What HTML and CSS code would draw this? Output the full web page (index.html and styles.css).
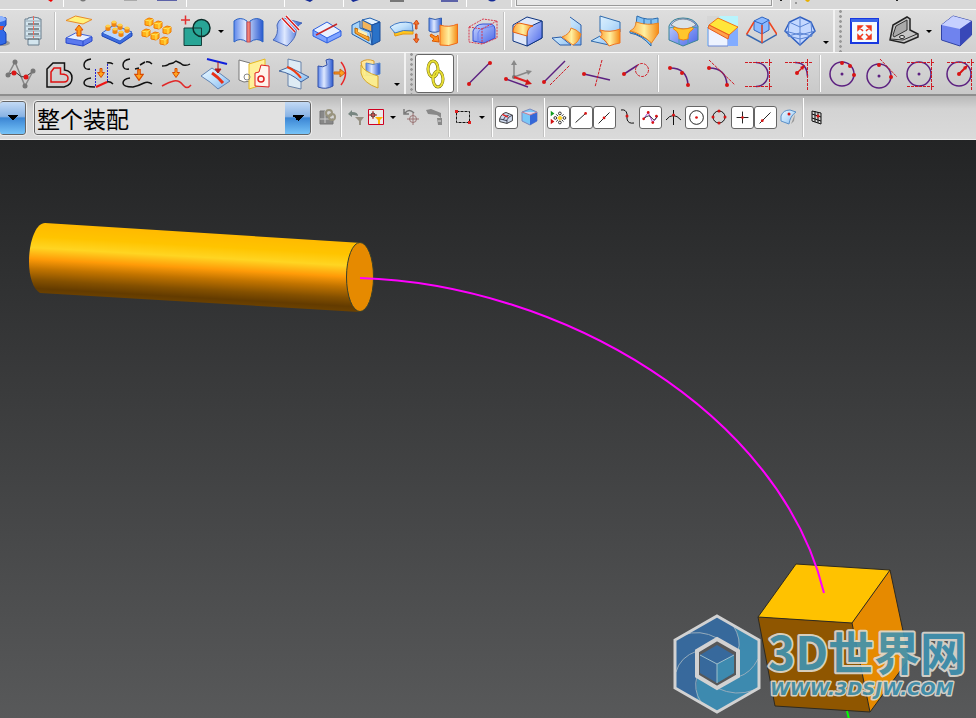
FILE: index.html
```html
<!DOCTYPE html>
<html lang="zh-CN">
<head>
    <meta charset="UTF-8">
    <meta name="viewport" content="width=device-width, initial-scale=1.0">
    <title>装配建模</title>
    <link rel="stylesheet" href="styles.css">
</head>
<body>
    <!-- Shared gradients and small symbols -->
    <svg class="defs" aria-hidden="true">
        <defs>
            <linearGradient id="blue"><stop offset="0" stop-color="#5d86ea"/><stop offset=".4" stop-color="#dfe9ff"/><stop offset="1" stop-color="#2858d0"/></linearGradient>
            <linearGradient id="ice" x2="1" y2="1"><stop offset="0" stop-color="#e9f7ff"/><stop offset=".5" stop-color="#bfe0fb"/><stop offset="1" stop-color="#80b4ee"/></linearGradient>
            <linearGradient id="deep" x2="1" y2="1"><stop offset="0" stop-color="#c8d6ff"/><stop offset="1" stop-color="#4a66e8"/></linearGradient>
            <linearGradient id="gold"><stop offset="0" stop-color="#ffa83a"/><stop offset=".5" stop-color="#fff0a0"/><stop offset="1" stop-color="#f58a14"/></linearGradient>
            <symbol id="arrow-down" viewBox="0 0 8 10"><path d="M3 .5h2v4h2.500L4 9.500.5 4.500H3z" fill="#ffa51e" stroke="#d84a00"/></symbol>
            <symbol id="cube" viewBox="0 0 10 10"><path d="M1 3l4-2 4 1v5L6 9 1 8z" fill="#ffb31a" stroke="#f07800"/><path d="M1 3l5 1v5M6 4l3-2" fill="none" stroke="#ffe75a"/></symbol>
            <symbol id="peg" viewBox="0 0 6 8"><path d="M.5 2v4q2.500 2 5 0V2z" fill="#ef8410"/><ellipse cx="3" cy="2" rx="2.500" ry="1.500" fill="#ffd04a"/></symbol>
        </defs>
    </svg>

    <header class="toolbars">
        <div class="toolbar toolbar-top">
            <svg class="top-left" viewBox="0 0 516 9">
                <path d="M48 0h5l-2 2z" fill="#f00000"/>
                <path d="M80 0h6q-3 3-6 0zM390 0h14v2h-14z" fill="#777"/>
                <path d="M124 0h13v1h-13z" fill="#aaa"/>
                <path d="M157 0h20v1h-20zM441 0h17v2h-17z" fill="#5c62a8"/>
                <path d="M305 0h8l-3 2zM351 0h8l-6 2zM488 0h8q-4 3-8 0z" fill="#142a96"/>
                <path d="M63.500 0v7M186.500 0v7M284.500 0v7M343.500 0v7M466.500 0v7M511.500 0v7" stroke="#fff"/>
            </svg>
            <input class="top-field" type="text" aria-label="命令查找器">
            <svg class="top-right" viewBox="0 0 140 9">
                <path d="M18.500 0v9" stroke="#fff"/>
                <path d="M8 0h2v1H8zM124 0h2v1h-2z" fill="#222"/>
                <path d="M33 0h5q-2 4-5 0z" fill="#e8b000"/>
                <path d="M23 2h2v2h-2z" fill="#999"/>
            </svg>
        </div>

        <div class="toolbar toolbar-features">
            <button class="tool" aria-label="孔"><svg viewBox="0 0 32 32"><ellipse cx="24" cy="28" rx="8" ry="3" fill="#999"/><path d="M12 3q8-3 16 0v7q-3 3-3 5 3 2 3 4v9q-8 4-16 1z" fill="#3169e8" stroke="#1743b4"/><path d="M18 11h8l-2 4h-6z" fill="#e5482a"/><ellipse cx="20" cy="4" rx="8" ry="3" fill="#8eb4ff"/></svg></button>
            <button class="tool" aria-label="螺纹"><svg viewBox="0 0 32 32"><path d="M11 3q5-2 11 0v1h2v20h-2v6H11v-6H8V4h3z" fill="#d3e5ee" stroke="#697d8c"/><path d="M9 6h15M9 11h15M9 16h15M9 21h15" stroke="#93a5b1"/><path d="M11 9h11M11 14h11M11 19h11M11 24h11" stroke="#30363c"/><path d="M16.500 1v22" stroke="#ee6a5c" stroke-dasharray="4 1"/></svg></button>
            <span class="separator"></span>
            <button class="tool" aria-label="拉伸"><svg viewBox="0 0 32 32"><path d="M4 5.500L13.500 1 30 4.500 21 9z" fill="#fff27a" stroke="#e88a2a"/><path d="M4 23v5l17 3 9-5v-4z" fill="#5b79ee" stroke="#2746c8"/><path d="M4 23l9.500-5L30 21.500 21 26z" fill="#e6efff" stroke="#3f60d8"/><path d="M21 26v5" stroke="#2746c8"/><path d="M17 10l4 5h-2v6h-4v-6h-2z" fill="#ff9d14" stroke="#dc5000"/></svg></button>
            <button class="tool" aria-label="实例特征"><svg viewBox="0 0 32 32"><path d="M1 18v3l18 8 12-8v-3z" fill="#3d6be0" stroke="#1a46b8"/><path d="M1 18l12-8 18 7-12 9z" fill="#b9d6ff" stroke="#2f60cc"/><use href="#peg" x="10" y="5" width="6" height="8"/><use href="#peg" x="4" y="9" width="6" height="8"/><use href="#peg" x="16" y="8" width="6" height="8"/><use href="#peg" x="23" y="11" width="6" height="8"/><use href="#peg" x="11" y="12" width="6" height="8"/><use href="#peg" x="17" y="15" width="6" height="8"/></svg></button>
            <button class="tool" aria-label="阵列"><svg viewBox="0 0 32 32"><use href="#cube" x="4" y="2" width="10" height="10"/><use href="#cube" x="13" y="5" width="10" height="10"/><use href="#cube" x="22" y="10" width="10" height="10"/><use href="#cube" x="1" y="13" width="10" height="10"/><use href="#cube" x="10" y="16" width="10" height="10"/><use href="#cube" x="19" y="21" width="10" height="10"/></svg></button>
            <button class="tool" aria-label="求和"><svg viewBox="0 0 32 32"><circle cx="22.500" cy="13" r="8.500" fill="#28a596"/><path d="M5 13h17.500v17.500H5z" fill="#28a596" stroke="#153f3a"/><circle cx="22.500" cy="13" r="8.500" fill="none" stroke="#0b2c28" stroke-width="1.500"/><path d="M2 5h9M6.500.5v9" stroke="#e23131" stroke-width="1.500"/></svg></button>
            <button class="drop" aria-label="更多布尔运算"></button>
            <button class="tool" aria-label="修剪体"><svg viewBox="0 0 32 32"><path d="M2 6q6-5 13 0v21q-7-5-13 0zM18 6q7-5 13 0v21q-6-5-13 0z" fill="url(#blue)" stroke="#2b62c4"/><path d="M15 7h3v20h-3z" fill="#f0837a" stroke="#d05050"/></svg></button>
            <button class="tool" aria-label="修剪片体"><svg viewBox="0 0 32 32"><path d="M2 25q6-5 4-15 1-5 6-7l19 5q-6 3-6 9t-9 14z" fill="url(#blue)" stroke="#4a69b8"/><path d="M11 3l13 14M15 1l13 14" stroke="#fff" stroke-width="3"/><path d="M11 3l13 14M15 1l13 14" stroke="#d81e1e" stroke-width="1.500"/></svg></button>
            <button class="tool" aria-label="拆分体"><svg viewBox="0 0 32 32"><path d="M3 15v6l14 7 14-7v-5z" fill="#7fa4ff" stroke="#2d5ee0"/><path d="M3 15l14-8 14 9-14 7z" fill="#e9f1ff" stroke="#2d5ee0"/><path d="M17 23v5" stroke="#2d5ee0"/><path d="M6 20L27 9" stroke="#c82828" stroke-width="1.500"/></svg></button>
            <button class="tool" aria-label="抽取"><svg viewBox="0 0 32 32"><path d="M3 10l8-4v7l10 4 2 13L3 19z" fill="#a8d4f8" stroke="#1e5eae"/><path d="M6 13l3 1v3l11 5v4L6 18z" fill="#ffa62e" stroke="#b06a10"/><path d="M9 14l9 4v3l-9-4z" fill="#fff0b0"/><path d="M13 5l8-2 10 4-8 3z" fill="#dff0ff" stroke="#1e5eae"/><path d="M13 5l10 5v7l-10-4z" fill="#f2b45a" stroke="#1e5eae"/><path d="M23 10l8-3v19l-8 4z" fill="#2a72c8" stroke="#1a4c98"/></svg></button>
            <button class="tool" aria-label="加厚"><svg viewBox="0 0 32 32"><path d="M6 17q9-4 19-2v4Q14 18 7 21z" fill="#ffc61c" stroke="#e8960c"/><path d="M2 12q9-7 22-4l1 8q-10-2-18 2z" fill="url(#ice)" stroke="#3e78c4"/><path d="M28.500 5l2.500 4h-2v5h-1.500V9h-2zM28.500 28l2.500-4h-2v-5h-1.500v5h-2z" fill="#f5762c" stroke="#d04a16"/></svg></button>
            <button class="tool" aria-label="偏置曲面"><svg viewBox="0 0 32 32"><path d="M2 3q6 3 12.500 0v12q-6 4-12.500 1z" fill="url(#blue)" stroke="#315eae"/><path d="M13 10q9 3 17.500-1v19q-9 4-17.500 2z" fill="url(#gold)" stroke="#ee6a1c"/><path d="M4 19l5 3 2-2 1 7-7-1 2-2-4-3z" fill="#ff8b1c" stroke="#dd5a00"/></svg></button>
            <button class="tool" aria-label="包容体"><svg viewBox="0 0 32 32"><path d="M7 26V16q3-7 10-7h8q4 1 4 5v9l-11 5z" fill="url(#deep)" stroke="#3250d4"/><path d="M12 27v-9q2-5 7-5l9-2" fill="none" stroke="#6a84f0"/><path d="M3 12L17 4l14 2v17l-15 6-13-2zM3 12l13 2v15M16 14l15-8" fill="none" stroke="#d8344a" stroke-dasharray="2 1"/></svg></button>
            <span class="separator"></span>
            <button class="tool" aria-label="边倒圆"><svg viewBox="0 0 32 32"><path d="M2 10L16 2l15 4v17l-15 8-14-5z" fill="#dfe7f8" stroke="#0e3480"/><path d="M16 13L31 6v17l-15 8z" fill="url(#deep)" stroke="#0e3480"/><path d="M2 16q1-7 6-8l14 3q-6 1-6 10L2 17z" fill="url(#gold)" stroke="#e95e10"/></svg></button>
            <button class="tool" aria-label="面倒圆"><svg viewBox="0 0 32 32"><path d="M20 2l11 8v20h-8M2 23l9-1 10 8H10z" fill="url(#ice)" stroke="#2a5da8"/><path d="M12 22q8-3 9-9 5 1 10 6-2 8-8 11z" fill="url(#gold)" stroke="#e9812a"/></svg></button>
            <button class="tool" aria-label="软倒圆"><svg viewBox="0 0 32 32"><path d="M11 1l20 6v10H11zM2 26l9-5 9 9z" fill="url(#ice)" stroke="#2f6aac"/><path d="M11 15q10 3 20-1v14q-6 1-11 3-3-6-9-9 4-2 0-7z" fill="url(#gold)" stroke="#f07422"/></svg></button>
            <button class="tool" aria-label="桥接"><svg viewBox="0 0 32 32"><path d="M9 1q10 5 21 2v7H8zM2 16l21 10v5Q14 20 2 18z" fill="#83c2f4" stroke="#2a6aac"/><path d="M8 7q12 4 22.500 1v10l-7 10Q13 18 2 16q6-3 6-9z" fill="url(#gold)" stroke="#ee8420"/><path d="M16 4v5M23 5v4" stroke="#2a6aac"/></svg></button>
            <button class="tool" aria-label="球形拐角"><svg viewBox="0 0 32 32"><path d="M2 11Q5 3 16 3t15 8v14l-15 6-14-6z" fill="url(#deep)" stroke="#3c8494"/><path d="M4 10q4-6 12-6t13 6q-5 4-12 4T4 10z" fill="#dce2e8" stroke="#789"/><path d="M7 12q4 2 9 2t10-2q1 2-1 3-4 2-4 9-5 2-9 0 0-7-4-9-3-1-1-3z" fill="#ffc62c" stroke="#f08214"/><path d="M2 13l5-1M25 12l6 1M12 29v-5M21 29v-5" fill="none" stroke="#42a0b0"/></svg></button>
            <button class="tool" aria-label="倒斜角"><svg viewBox="0 0 32 32"><path d="M1 1h31v30H1z" fill="#b8f4fc"/><path d="M1 1h13L1 11z" fill="#d6d6d6"/><path d="M2 12l20 8v11H2z" fill="#edf3ff" stroke="#6a86d4"/><path d="M22 20l10-9v20H22z" fill="#82acff"/><path d="M3 10l9-7 20 9-9 8z" fill="#ffe63a" stroke="#f27216"/><path d="M3 10l20 10-1 4L2 13z" fill="#ffa24a" stroke="#e85a1c"/></svg></button>
            <button class="tool" aria-label="拔模"><svg viewBox="0 0 32 32"><path d="M1.500 19.500L17 28l15-8.500" fill="none" stroke="#3567b0" stroke-width="1.500"/><path d="M9 6l8-4 7 3v10l-7 4-8-4z" fill="#8cbaff" stroke="#2f64c0"/><path d="M9 6l8 3 7-4M17 9v10" fill="none" stroke="#2f64c0"/><path d="M9 7L1.500 19.500M24 7l8 12.500M17 10v18" stroke="#ee4520" stroke-width="1.500"/></svg></button>
            <button class="tool" aria-label="体"><svg viewBox="0 0 32 32"><path d="M16 2l11 5 4 9-15 14L1 16l4.500-9z" fill="#c4d8ff" stroke="#2f5fc0" stroke-width="1.500"/><path d="M5 7l11 5 11-5M1 16l15 4 15-4M16 2v28M5 7l-1 14 12-3 12 3-1-14M4 21l12 3 12-3" fill="none" stroke="#5a84d4"/></svg></button>
            <button class="drop drop-low" aria-label="工具条选项"></button>
            <span class="grip"></span>
            <button class="tool" aria-label="适合窗口"><svg viewBox="0 0 32 32"><path d="M3 4h27v24H3z" fill="#f4fbff" stroke="#1838e0" stroke-width="2"/><path d="M3 4h27v3H3z" fill="#3b66e8"/><path d="M10 11h4l-4 4zM23 11h-4l4 4zM10 24h4l-4-4zM23 24h-4l4-4zM11 12l4 4M22 12l-4 4M11 23l4-4M22 23l-4-4" fill="#f0381c" stroke="#f0381c" stroke-width="1.500"/></svg></button>
            <button class="tool" aria-label="渲染样式"><svg viewBox="0 0 32 32"><path d="M3 25l3-15L20 2l3 2v11l8 4v3l-14 6z" fill="#c6c6c6" stroke="#222" stroke-width="1.500"/><path d="M6 20l3-9 11-6v10L7 22z" fill="#a9a9a9" stroke="#333"/><path d="M3 24l13 1 14-6" fill="none" stroke="#333"/><ellipse cx="15" cy="22" rx="2.500" ry="1.500" fill="#eee" stroke="#222"/></svg></button>
            <button class="drop" aria-label="更多渲染样式"></button>
            <button class="tool" aria-label="视图方向"><svg viewBox="0 0 32 32"><path d="M1.500 10L13 1l18.500 5v14L20 31 1.500 25z" fill="#6f83ee" stroke="#3042a4"/><path d="M1.500 10L13 1l18.500 5L20 14z" fill="#c6d0ff"/><path d="M20 14l11.500-8v14L20 31z" fill="#3848b8"/></svg></button>
        </div>

        <div class="toolbar toolbar-curves">
            <button class="tool" aria-label="样条"><svg viewBox="0 0 32 32"><path d="M4 17l7-13 10 24 8-15" fill="none" stroke="#888" stroke-width="1.500"/><path d="M4 17q7-5 11 0t13-3" fill="none" stroke="#333"/><g fill="#777"><circle cx="4" cy="17" r="2.500"/><circle cx="11" cy="4" r="2.500"/><circle cx="21" cy="28" r="2.500"/><circle cx="29" cy="13" r="2.500"/></g><g fill="#dc1616"><circle cx="10" cy="15" r="2.500"/><circle cx="22" cy="19" r="2.500"/></g></svg></button>
            <button class="tool" aria-label="偏置曲线"><svg viewBox="0 0 32 32"><path d="M4 29V11l6-6h11.500v7q7.500 1 7.500 8t-8 9z" fill="none" stroke="#111" stroke-width="1.500"/><path d="M8 24V14l3-4h6.500v6q7.500 0 7.500 4t-4 4z" fill="none" stroke="#e01010" stroke-width="1.500"/></svg></button>
            <button class="tool" aria-label="桥接曲线"><svg viewBox="0 0 32 32"><path d="M9 1Q2 2 2 7t6 4M25 5q3-1 6 1M9 20q-7 1-7 5t11 4M25 24q3-1 6 2" fill="none" stroke="#111" stroke-width="1.500"/><path d="M13.500 11v17M25.500 6v18" stroke="#2020d8" stroke-dasharray="2 1"/><path d="M14 29l11-5" stroke="#ee1414" stroke-width="2"/><use href="#arrow-down" x="15" y="10" width="8" height="10"/></svg></button>
            <button class="tool" aria-label="连结曲线"><svg viewBox="0 0 32 32"><path d="M9 1Q2 2 2 7t6 4M14 11l4-1M19 7l5-3M25 4q3-1 6 2M9 20q-7 1-7 5t10 4q5-1 11-4 4-2 8 1" fill="none" stroke="#111" stroke-width="1.500"/><use href="#arrow-down" x="13" y="11" width="10" height="12"/></svg></button>
            <button class="tool" aria-label="光顺曲线"><svg viewBox="0 0 32 32"><path d="M2 8q5 0 7-2l4-1 3-2 4 2 3 2q4 1 7-1" fill="none" stroke="#111" stroke-width="1.500"/><path d="M2 28Q9 24 14 23t9 4 8 0" fill="none" stroke="#e02828" stroke-width="1.500"/><use href="#arrow-down" x="12" y="10" width="8" height="10"/></svg></button>
            <button class="tool" aria-label="投影曲线"><svg viewBox="0 0 32 32"><path d="M2 18l11-8q9 6 18 13l-12 8Q12 24 2 18z" fill="url(#ice)" stroke="#6284b4"/><path d="M8 1l20 5" stroke="#1020dc" stroke-width="2"/><path d="M19 4v8M16 11h6l-3 4z" stroke="#b01818" fill="#b01818"/><path d="M13 15q6 4 11 10" fill="none" stroke="#e73018" stroke-width="3"/></svg></button>
            <button class="tool" aria-label="组合投影"><svg viewBox="0 0 32 32"><path d="M1 2l11 3v18l-6 1-5-2z" fill="#fff" stroke="#777"/><path d="M11 6l16-5v25l-16 5z" fill="#fff09a" stroke="#e6b820"/><circle cx="9" cy="19" r="3" fill="none" stroke="#888"/><path d="M17 28V15l4-1 2-7 8 1v21z" fill="#fff3ec" stroke="#e02020"/><circle cx="23" cy="21" r="3" fill="none" stroke="#e02020" stroke-width="1.500"/></svg></button>
            <button class="tool" aria-label="相交曲线"><svg viewBox="0 0 32 32"><path d="M11 1l13 3v27l-13-3z" fill="#deebf4" stroke="#6882a8"/><path d="M2 13l10-4 20 10-8 5Q14 15 2 13z" fill="url(#ice)" stroke="#45679e"/><path d="M10 9q8 3 14 11" fill="none" stroke="#f03c10" stroke-width="2"/></svg></button>
            <button class="tool" aria-label="抽取曲线"><svg viewBox="0 0 32 32"><path d="M2 8q5 2 9-1l-1-5q3-2 7 0v26q-7 4-15 1z" fill="url(#blue)" stroke="#3351a8"/><path d="M18 14h6v-3l5 4-5 4v-3h-6z" fill="#ff9f1c" stroke="#c86414"/><path d="M25 4q9 11 0 23" fill="none" stroke="#e82828" stroke-width="1.500"/></svg></button>
            <button class="tool" aria-label="缠绕曲线"><svg viewBox="0 0 32 32"><path d="M6 4q6-4 13-1v12l-10 3z" fill="#ffe596" stroke="#d69c34"/><path d="M11 5q7 3 14 0v11q-7 3-14 1z" fill="url(#blue)" stroke="#5a88c8"/><path d="M6 7q3 7 17 11v12Q8 25 6 15z" fill="#fff08a" fill-opacity=".9" stroke="#d8a82a"/></svg></button>
            <button class="drop drop-low" aria-label="工具条选项"></button>
            <span class="grip"></span>
            <button class="tool tool-on" aria-label="关联"><svg viewBox="0 0 32 32"><g fill="none"><g stroke="#777010" stroke-width="3"><ellipse cx="14" cy="11" rx="5" ry="8"/><ellipse cx="19" cy="21" rx="5" ry="8"/></g><g stroke="#e9df35" stroke-width="2"><ellipse cx="14" cy="11" rx="5" ry="8"/><ellipse cx="19" cy="21" rx="5" ry="8"/></g></g></svg></button>
            <span class="separator"></span>
            <button class="tool" aria-label="直线"><svg viewBox="0 0 32 32"><path d="M4.500 26l21-21" class="curve"/><circle cx="5" cy="26" r="2" class="dot"/><circle cx="26" cy="5" r="2" class="dot"/></svg></button>
            <button class="tool" aria-label="沿轴直线"><svg viewBox="0 0 32 32"><path d="M11 19V5M11 19l14-5" stroke="#888" stroke-width="1.500"/><path d="M8 7l3-5 3 5zM23 12l6 1-4 4z" fill="#888"/><circle cx="11" cy="19" r="2" fill="#777"/><path d="M11 19l14 5" stroke="#e02020" stroke-width="2"/><path d="M24 21l5 5-7 1z" fill="#d01414"/><path d="M3 21l22 8" class="curve"/><circle cx="3" cy="21" r="2" class="dot"/></svg></button>
            <button class="tool" aria-label="平行直线"><svg viewBox="0 0 32 32"><path d="M2 24L23 3" class="curve"/><path d="M8 27L28 7" class="guide"/><circle cx="2" cy="24" r="2" class="dot"/></svg></button>
            <button class="tool" aria-label="垂直直线"><svg viewBox="0 0 32 32"><path d="M3 16l26 6" class="curve"/><path d="M21 2l-7 27" class="guide"/><circle cx="3" cy="16" r="2" class="dot"/></svg></button>
            <button class="tool" aria-label="相切直线"><svg viewBox="0 0 32 32"><path d="M4 16l14-9" class="curve"/><circle cx="22" cy="12" r="6.500" class="guide"/><circle cx="4" cy="16" r="2" class="dot"/></svg></button>
            <span class="separator"></span>
            <button class="tool" aria-label="三点圆弧"><svg viewBox="0 0 32 32"><path d="M5 10q17 0 18 17" class="curve"/><circle cx="5" cy="10" r="2" class="dot"/><circle cx="17" cy="15" r="2" class="dot"/><circle cx="23" cy="27" r="2" class="dot"/></svg></button>
            <button class="tool" aria-label="相切圆弧"><svg viewBox="0 0 32 32"><path d="M5 10q17 0 18 17" class="curve"/><path d="M5 2l26 25" class="guide"/><circle cx="5" cy="10" r="2" class="dot"/><circle cx="23" cy="27" r="2" class="dot"/></svg></button>
            <button class="tool" aria-label="双切圆弧"><svg viewBox="0 0 32 32"><path d="M13 4.500a12 12 0 0 1 0 24" class="curve"/><path d="M2 4.500h28M2 28.500h28M26.500 1v31" class="guide"/></svg></button>
            <button class="tool" aria-label="半径圆弧"><svg viewBox="0 0 32 32"><path d="M13 4.500q12 0 12.500 14" class="curve"/><path d="M3 4.500h27M25.500 1v31" class="guide"/><path d="M15 15l6-6" stroke="#d81414" stroke-width="1.500"/><path d="M18 9l5-2-2 5z" class="dot"/><circle cx="15" cy="15" r="2" class="dot"/></svg></button>
            <span class="separator"></span>
            <button class="tool" aria-label="三点圆"><svg viewBox="0 0 32 32"><circle cx="15" cy="16" r="12" class="curve"/><circle cx="15" cy="16" r="1.500" fill="#5c2080"/><circle cx="15" cy="5" r="2" class="dot"/><circle cx="23" cy="8" r="2" class="dot"/><circle cx="27" cy="17" r="2" class="dot"/></svg></button>
            <button class="tool" aria-label="相切圆"><svg viewBox="0 0 32 32"><circle cx="13" cy="18" r="12" class="curve"/><circle cx="13" cy="18" r="1.500" fill="#5c2080"/><path d="M14 1l17 18" class="guide"/><circle cx="13" cy="7" r="2" class="dot"/><circle cx="25" cy="19" r="2" class="dot"/></svg></button>
            <button class="tool" aria-label="双切圆"><svg viewBox="0 0 32 32"><circle cx="14" cy="16" r="12" class="curve"/><circle cx="14" cy="16" r="1.500" fill="#5c2080"/><path d="M2 4.500h27M2 28.500h27M26.500 1v31" class="guide"/></svg></button>
            <button class="tool" aria-label="半径圆"><svg viewBox="0 0 32 32"><circle cx="15" cy="16" r="12" class="curve"/><path d="M3 4.500h27M27.500 1v31" class="guide"/><path d="M15 16l7-7" stroke="#d81414" stroke-width="2"/><path d="M19 9l5-2-2 5z" class="dot"/><circle cx="15" cy="16" r="2" class="dot"/></svg></button>
        </div>

        <div class="toolbar toolbar-selection">
            <select class="picker picker-type" aria-label="类型过滤器"><option></option></select>
            <select class="picker picker-scope" aria-label="选择范围"><option>整个装配</option></select>
            <button class="mini" aria-label="仅在工作部件内"><svg viewBox="0 0 23 23"><path d="M5 5h5v5h4v3h4v5H5z" fill="#888" stroke="#777"/><path d="M10 5v12M5 13h12" stroke="#ccc"/><g fill="none" stroke="#99947f" stroke-width="2"><circle cx="14" cy="7" r="3"/><circle cx="17" cy="11" r="3"/></g></svg></button>
            <span class="separator"></span>
            <button class="mini" aria-label="重置过滤器"><svg viewBox="0 0 23 23"><path d="M4 8l4-4v2q6 0 6 4-3-1-6-1v2z" fill="#778580"/><path d="M11 11h9l-3 4v4h-2v-4z" fill="#969184"/></svg></button>
            <button class="mini mini-narrow" aria-label="过滤器"><svg viewBox="0 0 19 23"><path d="M1.500 3.500h15v15h-15z" fill="#eceaea" stroke="#d00020"/><circle cx="6" cy="9" r="2" fill="none" stroke="#222"/><path d="M6 5v8M2 9h8" stroke="#b02020"/><path d="M8 11h8l-3 3v4h-2v-4z" fill="#ffb400"/></svg></button>
            <button class="drop" aria-label="过滤器选项"></button>
            <button class="mini" aria-label="取消选择"><svg viewBox="0 0 23 23"><path d="M5 7q4-5 9 0M4 3v5h5" fill="none" stroke="#777" stroke-width="1.500"/><circle cx="13" cy="13" r="3.500" fill="none" stroke="#9a7474"/><path d="M13 7v12M7 13h12" stroke="#9a7474"/></svg></button>
            <button class="mini" aria-label="全部选择"><svg viewBox="0 0 23 23"><path d="M3 4l5-1 10 4v5l-4-3-9-1zM14 12h5v7h-4z" fill="#888"/><path d="M15 15h3" stroke="#ddd"/></svg></button>
            <span class="separator"></span>
            <button class="mini" aria-label="矩形选择"><svg viewBox="0 0 23 23"><path d="M4.500 5.500h13v11h-13z" fill="none" stroke="#111" stroke-dasharray="3 1"/><path d="M3 4h3v3H3zM16 15h3v3h-3z" fill="#e02020"/></svg></button>
            <button class="drop" aria-label="选择方式"></button>
            <span class="separator"></span>
            <button class="mini mini-on" aria-label="高亮隐藏边"><svg viewBox="0 0 23 23"><path d="M4 13q2-6 7-7l7 3v6l-6 3-8-2z" fill="#ccd8ec" stroke="#333"/><path d="M8 14q2-5 6-5M12 18v-4q2-4 6-5M4 13l8 2" fill="none" stroke="#334"/><path d="M7 8l6 3" stroke="#e02020" stroke-width="1.500"/></svg></button>
            <button class="mini" aria-label="着色体"><svg viewBox="0 0 23 23"><path d="M4 6l8-3 7 3v9l-7 4-8-4z" fill="#7ac8f8" stroke="#7a88c0"/><path d="M12 9l7-3v9l-7 4z" fill="#3568d8"/><path d="M4 6l8 3 7-3" fill="#ddd6f0" stroke="#c08090"/></svg></button>
            <span class="separator"></span>
            <button class="mini mini-on" aria-label="启用捕捉点"><svg viewBox="0 0 23 23"><path d="M3 4l4 3-4 3z" fill="#139c20"/><path d="M3 13l4 3-4 3z" fill="#d01010"/><path d="M13 9l3 3-3 3-3-3z" fill="#ffd426"/><g fill="none" stroke="#222"><circle cx="13" cy="7" r="1.500"/><circle cx="13" cy="17" r="1.500"/><circle cx="8" cy="12" r="1.500"/><circle cx="18" cy="12" r="1.500"/><path d="M9 8l2 2M17 8l-2 2M9 16l2-2M17 16l-2-2"/></g></svg></button>
            <button class="mini mini-on" aria-label="端点"><svg viewBox="0 0 23 23"><path d="M5 17L16 7" class="line"/><circle cx="16" cy="7" r="1.500" class="dot"/></svg></button>
            <button class="mini mini-on" aria-label="中点"><svg viewBox="0 0 23 23"><path d="M5 18L17 6" class="line"/><circle cx="11" cy="12" r="1.500" class="dot"/></svg></button>
            <button class="mini" aria-label="控制点"><svg viewBox="0 0 23 23"><path d="M5 4q5-1 6 4v5q1 5 7 4" class="line"/><circle cx="11" cy="10" r="1.500" class="dot"/></svg></button>
            <button class="mini mini-on" aria-label="极点"><svg viewBox="0 0 23 23"><path d="M4 13l5-7 5 11 5-7" fill="none" stroke="#9828c0"/><path d="M4 13q6-6 9-1t6-2" fill="none" stroke="#222"/><g class="dot"><circle cx="4" cy="13" r="1.500"/><circle cx="9" cy="6" r="1.500"/><circle cx="14" cy="17" r="1.500"/><circle cx="18" cy="10" r="1.500"/></g></svg></button>
            <button class="mini" aria-label="交点"><svg viewBox="0 0 23 23"><path d="M4 14q7-9 15 0M11.500 4v15" class="line"/><circle cx="11.500" cy="9" r="1.500" class="dot"/></svg></button>
            <button class="mini mini-on" aria-label="圆心"><svg viewBox="0 0 23 23"><circle cx="11.500" cy="11.500" r="7.500" class="line"/><circle cx="11.500" cy="11.500" r="1.500" class="dot"/></svg></button>
            <button class="mini" aria-label="象限点"><svg viewBox="0 0 23 23"><circle cx="11" cy="11" r="6" class="line"/><g class="dot"><circle cx="11" cy="5" r="1.500"/><circle cx="5" cy="11" r="1.500"/><circle cx="17" cy="11" r="1.500"/><circle cx="11" cy="17" r="1.500"/></g></svg></button>
            <button class="mini mini-on" aria-label="现有点"><svg viewBox="0 0 23 23"><path d="M11.500 5v13M5 11.500h13" class="line"/><circle cx="11.500" cy="11.500" r="1.500" class="dot"/></svg></button>
            <button class="mini mini-on" aria-label="曲线上的点"><svg viewBox="0 0 23 23"><path d="M5 18L17 6" class="line"/><circle cx="8" cy="15" r="1.500" class="dot"/></svg></button>
            <button class="mini" aria-label="面上的点"><svg viewBox="0 0 23 23"><path d="M18 8l-1 7-3 3z" fill="#999"/><path d="M4 10q2-6 9-6l6 2q-6 4-7 12l-8-3z" fill="url(#ice)" stroke="#5a90c8"/><circle cx="12" cy="8" r="1.500" class="dot"/></svg></button>
            <span class="separator"></span>
            <button class="mini" aria-label="有界栅格上的点"><svg viewBox="0 0 23 23"><path d="M6 5l9 2v11l-9-3zM9 5v11M12 6v11M6 8l9 3M6 12l9 3" class="line"/><circle cx="12" cy="10" r="1.500" class="dot"/></svg></button>
        </div>
    </header>

    <main class="viewport">
        <svg class="model" viewBox="0 140 976 578" role="img" aria-label="圆柱、曲线与方块">
            <defs>
                <linearGradient id="cylinder" gradientUnits="userSpaceOnUse" x1="45" y1="223" x2="41" y2="293">
                    <stop offset="0" stop-color="#ffb900"/><stop offset=".2" stop-color="#ffc400"/><stop offset=".36" stop-color="#ffd522"/>
                    <stop offset=".52" stop-color="#ff9b08"/><stop offset=".66" stop-color="#c27400"/><stop offset=".82" stop-color="#845000"/>
                    <stop offset=".94" stop-color="#633b00"/><stop offset="1" stop-color="#6a4000"/>
                </linearGradient>
            </defs>

            <!-- Cylinder -->
            <path d="M45 223L362 243L359 312L40 293C33 289 29 276 29 262C29 241 36 223 45 223z" fill="url(#cylinder)"/>
            <ellipse cx="360" cy="277" rx="13.500" ry="34.500" fill="#e68a00" stroke="#37402c"/>

            <!-- Cube -->
            <path d="M796 564l94 6-38 53-94-6z" fill="#ffc200"/>
            <path d="M758 617l94 6 18 89-95-6z" fill="#8f5600"/>
            <path d="M890 570l19 89-39 53-18-89z" fill="#e68a00"/>
            <path d="M796 564l94 6 19 89-39 53-95-6-17-89zM758 617l94 6 38-53M852 623l18 89" fill="none" stroke="#2e2a20"/>

            <!-- Bridge curve -->
            <path d="M360 278C560 284 780 412 824 593" fill="none" stroke="#f0f" stroke-width="2"/>
            <path d="M847 711l2 8" stroke="#0f0" stroke-width="2"/>

            <!-- Site logo -->
            <g class="logo">
                <path d="M717 616l42 24v48l-42 24-42-24v-48z" fill="#356ca4"/>
                <path d="M733 625l26 15v48l-42 24-20-12q-1-12 0-24l20 12 21-12v-25q3-15-5-26z" fill="#3b90b9"/>
                <path d="M676 672q4-15 21-21M683 635q17-6 34 3M733 625q9 15 5 26M758 659q-7 14-20 18M754 690q-18 7-37-2M701 702q-8-12-4-26" fill="none" stroke="#9db6c8"/>
                <path d="M717 639l21 12v25l-21 12-20-12v-25z" fill="#58595a" stroke="#e0e0e0" stroke-width="4"/>
                <path d="M717 645l17 10v18l-17 10-17-10v-18z" fill="#356ca4"/>
                <path d="M717 664l17-9v18l-17 10z" fill="#3b90b9"/>
                <path d="M700 655l17 9 17-9M717 664v19" fill="none" stroke="#a8cbd9"/>
                <path d="M717 616l42 24v48l-42 24-42-24v-48z" fill="none" stroke="#e0e0e0" stroke-width="3"/>
                <text class="logo-name" x="768" y="670">3D世界网</text>
                <text class="logo-url" x="770" y="695">WWW.3DSJW.COM</text>
            </g>
        </svg>
    </main>
</body>
</html>
```

FILE: styles.css
```css
* {
    box-sizing: border-box;
}
body {
    display: flex;
    flex-direction: column;
    min-height: 100vh;
    margin: 0;
    overflow: hidden;
    background-color: #d6d6d6;
    font-family: "Noto Sans CJK SC", "Liberation Sans", sans-serif;
}
button {
    margin: 0;
    padding: 0;
    border: none;
    background: none;
    cursor: pointer;
}
.defs {
    position: absolute;
    width: 0;
    height: 0;
}

/* Toolbars */
.toolbars {
    overflow: hidden;
    border-bottom: 1px solid #eee;
}
.toolbar {
    display: flex;
    align-items: center;
}
.toolbar > * {
    flex-shrink: 0;
}
.toolbar-top {
    height: 10px;
    align-items: flex-start;
    background-color: #d8d8d8;
    border-bottom: 1px solid #f8f8f8;
}
.top-left {
    width: 516px;
    height: 9px;
}
.top-right {
    width: 140px;
    height: 9px;
}
.top-field {
    width: 256px;
    height: 6px;
    padding: 0;
    border: 1px solid #999;
    border-top: none;
    background-color: #e6e6e6;
    outline: 1px solid #f6f6f6;
}
.toolbar-features {
    height: 43px;
    margin-left: -26px; /* first tool is scrolled partly out */
    background: linear-gradient(#dedede, #d0d0d0);
    border-bottom: 1px solid #f8f8f8;
}
.toolbar-curves {
    height: 41px;
    background: linear-gradient(#d8d8d8, #c9c9c9);
}
.toolbar-selection {
    height: 45px;
    border-top: 2px solid #8e8e8e;
    background: linear-gradient(#b9b9b9, #d3d3d3 30%, #dadada);
}
.tool {
    display: flex;
    align-items: center;
    justify-content: center;
    width: 39px;
    height: 39px;
}
.tool svg {
    width: 32px;
    height: 32px;
}
.tool-on {
    border: 1px solid #666;
    border-radius: 3px;
    background-color: #fff;
}
.mini {
    width: 23px;
    height: 23px;
}
.mini svg {
    display: block;
    width: 100%;
    height: 100%;
}
.mini-narrow {
    width: 19px;
}
.mini-on {
    border: 1px solid #666;
    border-radius: 3px;
    background-color: #fff;
}
.separator {
    align-self: stretch;
    width: 2px;
    margin: 2px;
    border-left: 1px solid #c2c2c2;
    border-right: 1px solid #fff;
}
.grip {
    align-self: stretch;
    width: 11px;
    border-left: 2px solid #f2f2f2;
    background: radial-gradient(circle, #999 1px, #f4f4f4 2px, transparent 2px) 3px 4px / 5px 5px repeat-y;
}
.drop {
    display: flex;
    align-items: center;
    justify-content: center;
    width: 14px;
    height: 39px;
}
.drop::after {
    content: "";
    border: 3px solid transparent;
    border-top-color: #000;
    border-bottom: none;
}
.drop-low {
    align-items: flex-end;
    padding-bottom: 7px;
}

/* Lines inside the icons */
.curve {
    fill: none;
    stroke: #5c2080;
    stroke-width: 1.5;
}
.guide {
    fill: none;
    stroke: #d01c24;
    stroke-dasharray: 3 1;
}
.line {
    fill: none;
    stroke: #111;
}
.dot {
    fill: #d81414;
}

/* Drop-down lists */
.picker {
    appearance: none;
    height: 34px;
    padding: 0 28px 0 2px;
    border: 1px solid #666;
    border-radius: 3px;
    outline: 1px solid #eee;
    background:
        linear-gradient(135deg, #000 50%, transparent 50%) right 6px center / 6px 6px no-repeat,
        linear-gradient(225deg, #000 50%, transparent 50%) right 12px center / 6px 6px no-repeat,
        linear-gradient(#c3daf5, #89b3e4 45%, #3c86d4 50%, #76c3f8) right / 25px 100% no-repeat,
        #e1e1e1;
    color: #000;
    font-family: inherit;
    font-size: 23px;
    line-height: 30px;
}
.picker-type {
    width: 26px;
    padding: 0;
    border-left: none;
}
.picker-scope {
    width: 277px;
    margin: 0 4px 0 8px;
}

/* Model window */
.viewport {
    flex: 1;
    display: flex;
    background: linear-gradient(#232425, #58595a);
}
.model {
    display: block;
    width: 100%;
}
.logo {
    opacity: 0.9;
}
.logo text {
    fill: #3f93b2;
    stroke: #dedbd2;
    paint-order: stroke;
    stroke-linejoin: round;
    font-weight: bold;
}
.logo-name {
    font-family: "Noto Sans CJK SC", sans-serif;
    font-size: 46px;
    stroke-width: 4px;
}
.logo-url {
    font-family: "DejaVu Sans", sans-serif;
    font-size: 18px;
    font-style: italic;
    stroke-width: 3px;
}
```
